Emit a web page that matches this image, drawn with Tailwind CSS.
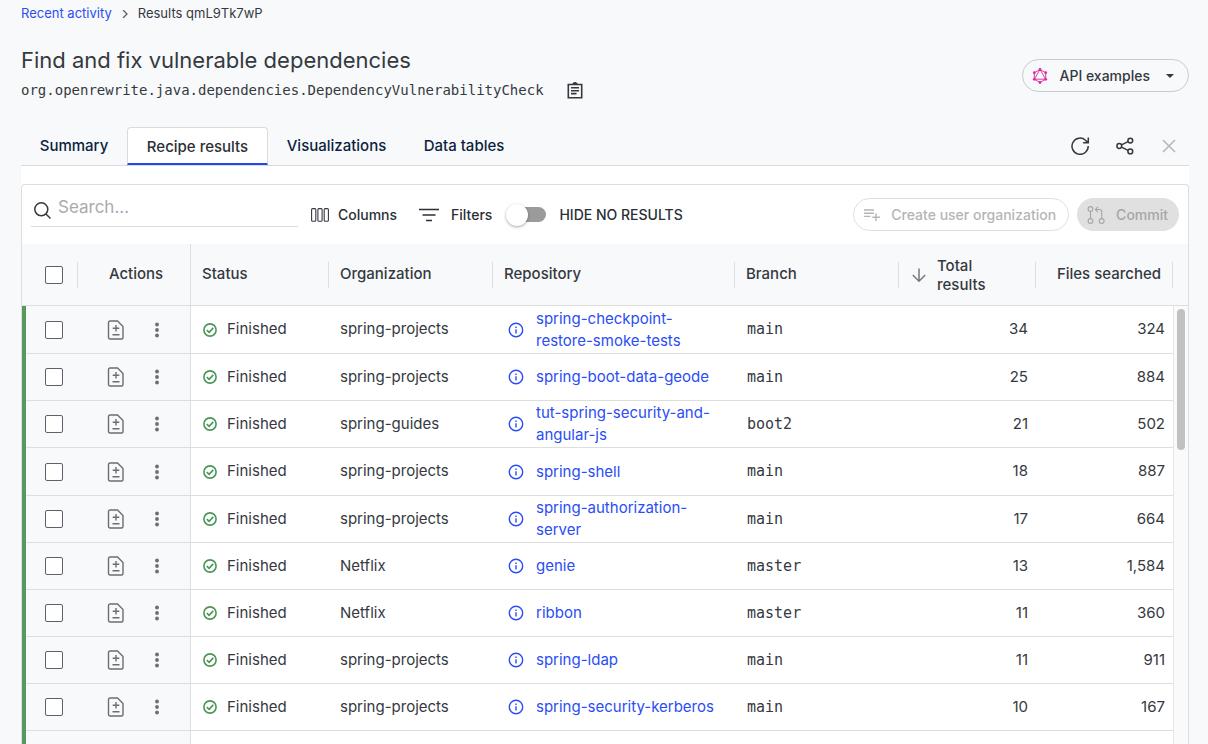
<!DOCTYPE html>
<html lang="en">
<head>
<meta charset="utf-8">
<meta name="viewport" content="width=device-width, initial-scale=1">
<title>Recipe results</title>
<script src="https://cdn.jsdelivr.net/npm/@tailwindcss/browser@4"></script>
</head>
<body class="flex h-screen flex-col overflow-hidden bg-[#f8f9fb] pr-[19px] pl-[21px] font-[Inter,sans-serif] text-[15px] text-[#35393f]">

<svg class="hidden" aria-hidden="true">
  <symbol id="i-diff" viewBox="0 0 18 20"><path d="M3 1h7.5L16 6.500V17.500a1.500 1.500 0 0 1-1.500 1.500H3a1.500 1.500 0 0 1-1.500-1.500v-15A1.500 1.500 0 0 1 3 1zM9 5v6.500M5.700 8.200h6.600M5.500 14.800h7" fill="none" stroke="currentColor" stroke-width="1.400"/></symbol>
  <symbol id="i-dots" viewBox="0 0 4 16"><circle cx="2" cy="2.500" r="1.900"/><circle cx="2" cy="8" r="1.900"/><circle cx="2" cy="13.500" r="1.900"/></symbol>
  <symbol id="i-ok" viewBox="0 0 14 14"><g fill="none" stroke="currentColor" stroke-width="1.600"><circle cx="7" cy="7" r="6.100"/><path d="M3.800 7.100l2.300 2.200 4.200-4.400"/></g></symbol>
  <symbol id="i-info" viewBox="0 0 16 16"><circle cx="8" cy="8" r="6.700" fill="none" stroke="currentColor" stroke-width="1.400"/><path d="M7.300 4.500h1.400V6H7.300zM7.300 7.200h1.400v4.400H7.300z" fill="currentColor"/></symbol>
</svg>

<nav aria-label="Breadcrumb" class="flex h-[27px] shrink-0 items-center text-[13px]">
  <a href="#" class="text-[#2a4df5]">Recent activity</a>
  <svg class="mx-[9px] size-2" viewBox="0 0 8 8" fill="none" stroke="#5a5e64" stroke-width="1.300"><path d="M2 0l4 4-4 4"/></svg>
  <span aria-current="page">Results qmL9Tk7wP</span>
</nav>

<header class="flex h-[100px] shrink-0 justify-between">
  <div class="pt-[19px]">
    <h1 class="text-[22px] leading-[28px]">Find and fix vulnerable dependencies</h1>
    <div class="mt-1 flex items-center gap-[23px]">
      <span class="font-['DejaVu_Sans_Mono',monospace] text-[14px] leading-[24px]">org.openrewrite.java.dependencies.DependencyVulnerabilityCheck</span>
      <button aria-label="Copy recipe name"><svg class="block h-[17px] w-4" viewBox="0 0 16 17" fill="none" stroke="#35393f" stroke-width="1.600"><path d="M1.300 2.500h13.400v13.300H1.300z"/><path d="M4 5.800h8M4 8.700h8M4 11.600h5.500"/><path d="M5.800 2.300a2.200 1.800 0 0 1 4.400 0z" fill="#35393f" stroke-width="1"/></svg></button>
    </div>
  </div>
  <button class="mt-8 flex h-[33px] items-center rounded-full border border-[#c9cbcf] pr-3.5 pl-[9px] text-[14px] font-medium">
    <svg class="mr-[11px] size-4" viewBox="0 0 16 16" stroke="#dd2a9d" fill="#dd2a9d"><path d="M8 1.500l5.700 3.300v6.400L8 14.500l-5.700-3.300V4.800zM8 1.500l5.700 9.700H2.300z" fill="none" stroke-width=".9"/><g stroke="none"><circle cx="8" cy="1.500" r="1.400"/><circle cx="13.700" cy="4.700" r="1.400"/><circle cx="13.700" cy="11.300" r="1.400"/><circle cx="8" cy="14.500" r="1.400"/><circle cx="2.300" cy="11.300" r="1.400"/><circle cx="2.300" cy="4.700" r="1.400"/></g></svg>
    API examples
    <svg class="ml-4 h-1 w-2" viewBox="0 0 8 4" fill="#35393f"><path d="M0 0h8L4 4z"/></svg>
  </button>
</header>

<div class="flex h-[39px] shrink-0 border-b border-[#d9dbdf]">
  <div role="tablist" class="flex font-medium text-[#0b1f40]">
    <button role="tab" aria-selected="false" class="w-[106px]">Summary</button>
    <button role="tab" aria-selected="true" class="w-[141px] rounded-t-[4px] border border-b-2 border-[#d9dbdf] border-b-[#2546f5] bg-white pt-[3px] text-[#2b2f36]">Recipe results</button>
    <button role="tab" aria-selected="false" class="w-[137px]">Visualizations</button>
    <button role="tab" aria-selected="false" class="w-[118px]">Data tables</button>
  </div>
  <div class="ml-auto flex items-center pr-[13px]">
    <button aria-label="Refresh"><svg class="block h-[18px] w-[19px]" viewBox="0 0 19 18" fill="none" stroke="#35393f" stroke-width="1.500"><path d="M17.200 9A8.100 8.100 0 1 1 14.500 3.200l2.200 2.200M17.300 .6v5.200h-5.200"/></svg></button>
    <button aria-label="Share" class="ml-[26px]"><svg class="block h-[18px] w-[18px]" viewBox="0 0 18 18" fill="none" stroke="#35393f" stroke-width="1.500"><circle cx="3.300" cy="9" r="2.400"/><circle cx="14.300" cy="3.600" r="2.400"/><circle cx="14.300" cy="14.400" r="2.400"/><path d="M5.500 7.900l6.600-3.200M5.500 10.100l6.600 3.200"/></svg></button>
    <button aria-label="Close" class="ml-[28px]"><svg class="block h-[14px] w-[14px]" viewBox="0 0 14 14" stroke="#b7b9bc" stroke-width="1.600"><path d="M1 1l12 12M13 1L1 13"/></svg></button>
  </div>
</div>

<main class="min-h-0 flex-1 overflow-hidden bg-white pt-[18px]">
  <section class="rounded-t-[4px] border border-b-0 border-[#dcdee0]">
    <div class="flex h-[59px] items-center pr-[9px] pl-[9px] text-[14px] font-medium text-[#2b2f36]">
      <label class="mb-[17px] flex h-[42px] w-[267px] items-center border-b border-[#dcdee0] pt-[9px]">
        <svg class="ml-[3px] size-[17px] shrink-0" viewBox="0 0 17 17" fill="none" stroke="#35393f" stroke-width="1.500"><circle cx="7.300" cy="7.300" r="6.500"/><path d="M12 12l4.500 4.500"/></svg>
        <input type="search" placeholder="Search..." aria-label="Search" class="ml-[7px] h-6 w-full min-w-0 pb-1 text-[17px] font-normal outline-none placeholder:text-[#a9abae]">
      </label>
      <button class="ml-[13px] flex items-center gap-[9px]">
        <svg class="h-[14px] w-[18px]" viewBox="0 0 18 14" fill="none" stroke="#35393f" stroke-width="1.100"><rect x=".6" y=".6" width="4.200" height="12.600" rx="1"/><rect x="6.900" y=".6" width="4.200" height="12.600" rx="1"/><rect x="13.200" y=".6" width="4.200" height="12.600" rx="1"/></svg>
        Columns
      </button>
      <button class="ml-[22px] flex items-center gap-3">
        <svg class="h-[14px] w-5" viewBox="0 0 20 14" stroke="#2b2f36" stroke-width="1.500"><path d="M0 1.500h20M3.500 7h13M7 12.500h6"/></svg>
        Filters
      </button>
      <label class="ml-[14px] flex items-center">
        <span class="relative mr-[13px] flex h-[22px] w-10 items-center justify-end">
          <input type="checkbox" role="switch" class="h-[15px] w-[34px] appearance-none rounded-full bg-[#9b9b9b]">
          <span class="absolute left-0 size-[22px] rounded-full bg-white shadow-[0_1px_3px_rgba(0,0,0,0.35)]"></span>
        </span>
        HIDE NO RESULTS
      </label>
      <button disabled class="ml-auto flex h-[33px] items-center rounded-full border border-[#dfdfdf] pr-3 pl-2.5 text-[#b5b5b5]">
        <svg class="mr-[11px] h-3 w-4" viewBox="0 0 16 12" stroke="#b5b5b5" stroke-width="1.400"><path d="M0 1h10M0 4.200h10M0 7.400h6.500M12 4.500V12M8.300 8.200H16"/></svg>
        Create user organization
      </button>
      <button disabled class="ml-2 flex h-[33px] items-center rounded-full bg-[#e0e0e0] pr-[11px] pl-2.5 text-[#a6a6a6]">
        <svg class="mr-[11px] h-[18px] w-[18px]" viewBox="0 0 18 18" fill="none" stroke="#a6a6a6" stroke-width="1.100"><circle cx="3.500" cy="3" r="2.400"/><circle cx="3.500" cy="15" r="2.400"/><circle cx="14.700" cy="15" r="2.400"/><path d="M3.500 5.400v7.200M14.700 12.600V5.500a2 2 0 0 0-2-2H8.500M11 .9L8.400 3.500 11 6.100"/></svg>
        Commit
      </button>
    </div>

    <table class="w-full table-fixed border-separate border-spacing-0 text-left">
      <colgroup>
        <col class="w-1"><col class="w-14"><col class="w-[109px]"><col class="w-[138px]"><col class="w-[164px]"><col><col class="w-[164px]"><col class="w-[137px]"><col class="w-[137px]"><col class="w-[15px]">
      </colgroup>
      <thead class="bg-[#f8f9fb]">
        <tr>
          <th colspan="2" class="h-[62px] border-b border-[#dcdee0] p-0"><div class="flex items-center pr-1 pl-[23px]"><input type="checkbox" aria-label="Select all rows" class="size-[18px] appearance-none rounded-[2px] border border-[#5b626e] bg-white"><span class="ml-auto h-[26px] w-px bg-[#dcdee0]"></span></div></th>
          <th class="border-r border-b border-[#dcdee0] p-0 text-center font-medium">Actions</th>
          <th class="border-b border-[#dcdee0] p-0 font-medium"><div class="flex items-center pl-[11px]">Status<span class="ml-auto h-[26px] w-px bg-[#dcdee0]"></span></div></th>
          <th class="border-b border-[#dcdee0] p-0 font-medium"><div class="flex items-center pl-[11px]">Organization<span class="ml-auto h-[26px] w-px bg-[#dcdee0]"></span></div></th>
          <th class="border-b border-[#dcdee0] p-0 font-medium"><div class="flex items-center pl-[11px]">Repository<span class="ml-auto h-[26px] w-px bg-[#dcdee0]"></span></div></th>
          <th class="border-b border-[#dcdee0] p-0 font-medium"><div class="flex items-center pl-[11px]">Branch<span class="ml-auto h-[26px] w-px bg-[#dcdee0]"></span></div></th>
          <th aria-sort="descending" class="border-b border-[#dcdee0] p-0 leading-[19px] font-medium"><div class="flex items-center pl-[13px]"><svg class="mr-[11px] size-[14px]" viewBox="0 0 14 14" fill="none" stroke="#75787c" stroke-width="1.500"><path d="M7 .5v12.500M.8 7L7 13.200 13.200 7"/></svg><span class="w-16">Total results</span><span class="ml-auto h-[26px] w-px bg-[#dcdee0]"></span></div></th>
          <th class="border-b border-[#dcdee0] p-0 font-medium"><div class="flex items-center justify-end">Files searched<span class="ml-[11px] h-[26px] w-px bg-[#dcdee0]"></span></div></th>
          <td class="border-b border-[#dcdee0] p-0"></td>
        </tr>
      </thead>
      <tbody id="rows"></tbody>
    </table>
  </section>
</main>

<script>
  const data = [
    ['spring-projects', 'spring-checkpoint-restore-smoke-tests', 'main', '34', '324'],
    ['spring-projects', 'spring-boot-data-geode', 'main', '25', '884'],
    ['spring-guides', 'tut-spring-security-and-angular-js', 'boot2', '21', '502'],
    ['spring-projects', 'spring-shell', 'main', '18', '887'],
    ['spring-projects', 'spring-authorization-server', 'main', '17', '664'],
    ['Netflix', 'genie', 'master', '13', '1,584'],
    ['Netflix', 'ribbon', 'master', '11', '360'],
    ['spring-projects', 'spring-ldap', 'main', '11', '911'],
    ['spring-projects', 'spring-security-kerberos', 'main', '10', '167'],
  ];
  const cell = 'border-b border-[#dcdee0] p-0';
  const rows = data.map(([org, repo, branch, total, files], i) => `
    <tr class="h-[47px] first:h-12 nth-4:h-12">
      ${i ? '' : '<td rowspan="10" aria-hidden="true" class="bg-[#58985f] p-0"></td>'}
      <td class="${cell} bg-[#f8f9fb] pl-[19px]"><input type="checkbox" aria-label="Select ${repo}" class="block size-[18px] appearance-none rounded-[2px] border border-[#5b626e] bg-white"></td>
      <td class="${cell} border-r bg-[#f8f9fb] pl-[25px] text-[#6b6e72]"><div class="flex items-center gap-[30px]">
        <button aria-label="View diff"><svg class="block h-5 w-[18px]"><use href="#i-diff"/></svg></button>
        <button aria-label="More actions"><svg class="block h-4 w-1 fill-[#6b6e72]"><use href="#i-dots"/></svg></button></div></td>
      <td class="${cell} pl-3"><div class="flex items-center gap-[10px]"><svg class="size-[14px] text-[#4b9556]"><use href="#i-ok"/></svg>Finished</div></td>
      <td class="${cell} pl-[11px]">${org}</td>
      <td class="${cell} pl-[15px]"><div class="flex items-center gap-3 text-[#2a4df5]"><svg class="size-4 shrink-0"><use href="#i-info"/></svg><a href="#" class="w-[190px] leading-[22px]">${repo}</a></div></td>
      <td class="${cell} pl-3 font-['DejaVu_Sans_Mono',monospace]">${branch}</td>
      <td class="${cell} pr-2 text-right">${total}</td>
      <td class="${cell} pr-2 text-right">${files}</td>
      ${i ? '' : '<td rowspan="10" aria-hidden="true" class="border-l border-[#e6e7e9] bg-[#fafafa] p-0 pt-[3px] pl-[3px] align-top"><div class="h-[141px] w-2 rounded-full bg-[#c1c1c1]"></div></td>'}
    </tr>`);
  rows.push(`<tr class="h-[47px]"><td class="${cell} bg-[#f8f9fb]"></td><td class="${cell} border-r bg-[#f8f9fb]"></td><td class="${cell}" colspan="6"></td></tr>`);
  document.getElementById('rows').innerHTML = rows.join('');
</script>
</body>
</html>
